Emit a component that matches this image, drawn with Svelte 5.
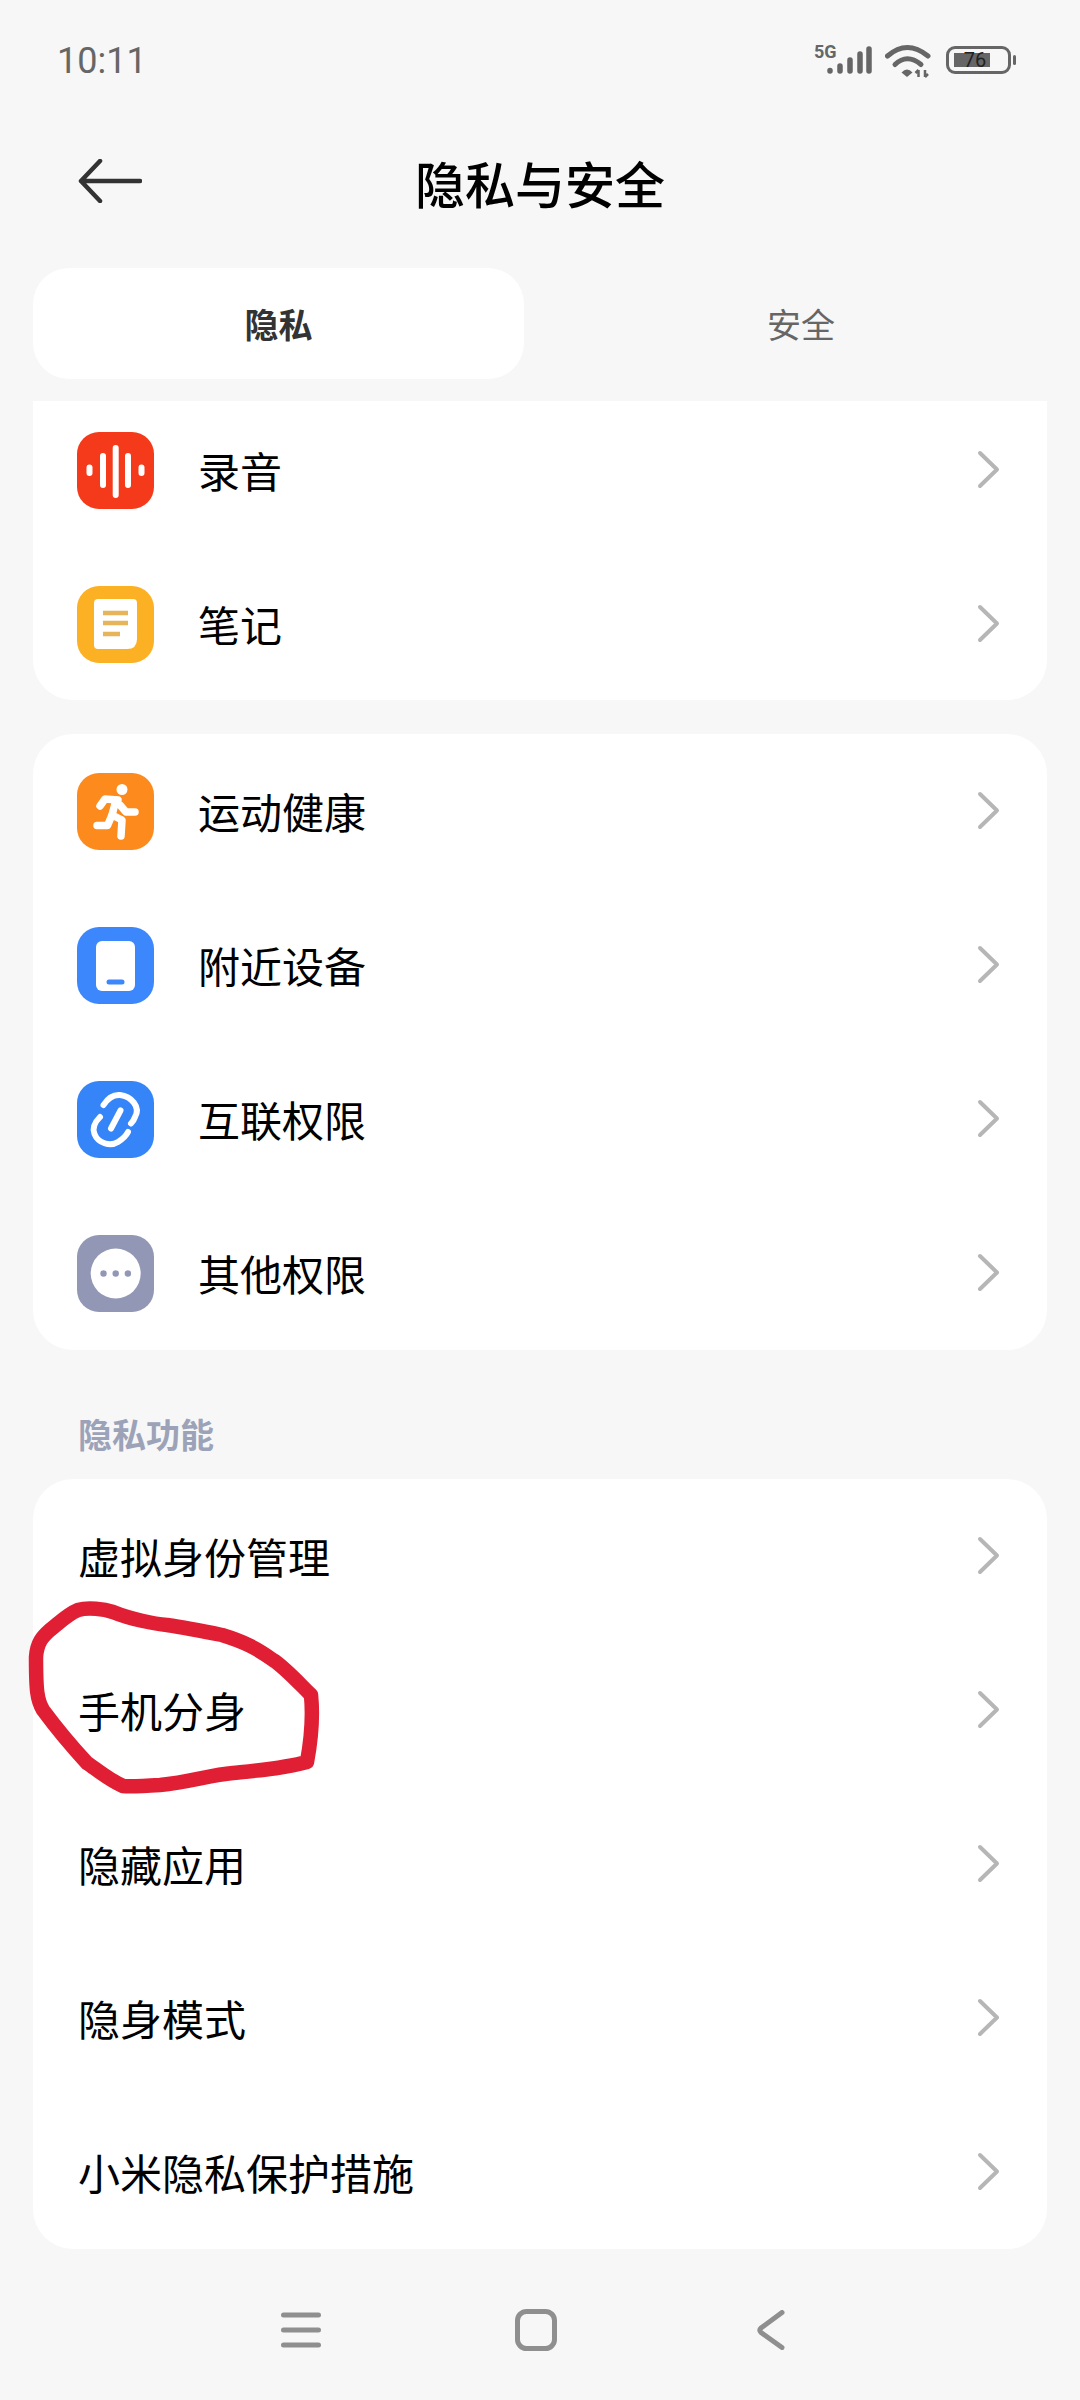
<script>
  const group1 = [
    { label: '录音', icon: 'rec' },
    { label: '笔记', icon: 'note' }
  ];
  const group2 = [
    { label: '运动健康', icon: 'run' },
    { label: '附近设备', icon: 'phone' },
    { label: '互联权限', icon: 'link' },
    { label: '其他权限', icon: 'more' }
  ];
  const group3 = ['虚拟身份管理', '手机分身', '隐藏应用', '隐身模式', '小米隐私保护措施'];
</script>

{#snippet chevron()}
  <svg class="chev" viewBox="0 0 24 40" aria-hidden="true">
    <path d="M3 3 L20 19.5 L3 36" fill="none" stroke="#b6b6b6" stroke-width="4" stroke-linecap="round" stroke-linejoin="round" />
  </svg>
{/snippet}

{#snippet appIcon(name)}
  <svg class="icon" viewBox="0 0 77 77" aria-hidden="true">
    {#if name === 'rec'}
      <rect width="77" height="77" rx="22" fill="#f43a1b" />
      <g stroke="#fff" stroke-width="6" stroke-linecap="round">
        <path d="M12.5 35.5v5.5M26 24v29M38.7 16v47M51 24v29M64.5 35.5v5.5" />
      </g>
    {:else if name === 'note'}
      <rect width="77" height="77" rx="22" fill="#fcb024" />
      <path d="M21 13H56a4 4 0 0 1 4 4V53Q60 63 50 63H21a4 4 0 0 1-4-4V17a4 4 0 0 1 4-4Z" fill="#fff" />
      <path d="M26 27H51M26 37H51M26 48H43" stroke="#e8b45a" stroke-width="4.5" fill="none" />
    {:else if name === 'run'}
      <rect width="77" height="77" rx="22" fill="#fc8a1c" />
      <circle cx="45" cy="16.5" r="5.5" fill="#fff" />
      <g fill="none" stroke="#fff" stroke-width="7.5" stroke-linecap="round" stroke-linejoin="round">
        <path d="M23 33L28 26L41 27" />
        <path d="M39 27L35 42L45 47L44 63" />
        <path d="M43 32L49 39H58" />
        <path d="M35 42L30.5 52.5H20" />
      </g>
    {:else if name === 'phone'}
      <rect width="77" height="77" rx="22" fill="#3b87fb" />
      <rect x="19" y="14" width="39" height="50" rx="6" fill="#fff" />
      <path d="M32 55H45" stroke="#3b87fb" stroke-width="5" stroke-linecap="round" />
    {:else if name === 'link'}
      <rect width="77" height="77" rx="22" fill="#3585f8" />
      <g fill="none" stroke="#fff" stroke-width="6" stroke-linecap="round">
        <path d="M34 47.5L43.5 29.5" />
        <path d="M26.5 24C31 17 37 13.5 43 14C54 15 64 26 58 36C57 39 55.500 41 54 42.500" />
        <path d="M23 36C18 41 15 47 17.500 53C21 62 33 66 41 61C45 58.500 49 55 51 51" />
      </g>
    {:else}
      <rect width="77" height="77" rx="22" fill="#9197b5" />
      <circle cx="38.700" cy="38.500" r="25" fill="#fff" />
      <g fill="#9197b5">
        <circle cx="26.500" cy="38.500" r="3.200" />
        <circle cx="38.700" cy="38.500" r="3.200" />
        <circle cx="50.900" cy="38.500" r="3.200" />
      </g>
    {/if}
  </svg>
{/snippet}

<div class="page">
  <div class="status">
    <span class="time">10:11</span>
    <div class="sys">
      <div class="signal">
        <span class="five">5G</span>
        <svg class="bars" viewBox="0 0 45 28" aria-hidden="true">
          <g fill="none" stroke="#666" stroke-width="5.500" stroke-linecap="round">
            <path d="M3 24.500v.5M13 20v5M23 14v11M33 8v17M42 3v22" />
          </g>
        </svg>
      </div>
      <svg class="wifi" viewBox="0 0 46 34" aria-hidden="true">
        <g fill="none" stroke="#666" stroke-width="5" stroke-linecap="round">
          <path d="M2.500 12Q22 -5 43 12" />
          <path d="M10 20.500Q22 9 36 20.500" />
        </g>
        <path d="M16.500 28.500Q22 22.500 27.500 28.500L22 33Z" fill="#666" />
        <path d="M33.500 33V26M30.500 29L33.500 26M40 26V33M43 30L40 33" fill="none" stroke="#666" stroke-width="2.500" />
      </svg>
      <div class="batt">
        <div class="cell">
          <div class="fill"></div>
          <span class="pct">76</span>
        </div>
        <span class="tip"></span>
      </div>
    </div>
  </div>

  <header class="head">
    <svg class="back" viewBox="0 0 64 44" aria-hidden="true">
      <path d="M22 2L3 22L22 42M3 22H62" fill="none" stroke="#333" stroke-width="4.500" stroke-linecap="round" stroke-linejoin="round" />
    </svg>
    <h1>隐私与安全</h1>
  </header>

  <div class="tabs">
    <div class="tab on">隐私</div>
    <div class="tab">安全</div>
  </div>

  <section class="card clip">
    {#each group1 as r}
      <div class="row">
        {@render appIcon(r.icon)}
        <span class="lab">{r.label}</span>
        {@render chevron()}
      </div>
    {/each}
  </section>

  <section class="card second">
    {#each group2 as r}
      <div class="row">
        {@render appIcon(r.icon)}
        <span class="lab">{r.label}</span>
        {@render chevron()}
      </div>
    {/each}
  </section>

  <div class="sect">隐私功能</div>

  <section class="card third">
    {#each group3 as t}
      <div class="row plain">
        <span class="lab">{t}</span>
        {@render chevron()}
      </div>
    {/each}
  </section>

  <nav class="nav">
    <svg class="n1" viewBox="0 0 40 36" aria-hidden="true">
      <path d="M2.500 3H37.500M2.500 18H37.500M2.500 33H37.500" stroke="#8f8f8f" stroke-width="5" stroke-linecap="round" />
    </svg>
    <svg class="n2" viewBox="0 0 42 42" aria-hidden="true">
      <rect x="2.500" y="2.500" width="37" height="37" rx="9" fill="none" stroke="#8f8f8f" stroke-width="5" />
    </svg>
    <svg class="n3" viewBox="0 0 28 40" aria-hidden="true">
      <path d="M25 2.500L4 18Q1.500 20 4 22.500L25 37.500" fill="none" stroke="#8f8f8f" stroke-width="5" stroke-linecap="round" stroke-linejoin="round" />
    </svg>
  </nav>

  <svg class="scribble" viewBox="0 0 1080 2400" aria-hidden="true">
    <path d="M78 1610C88 1607 104 1609 113 1612C130 1619 155 1624 167 1625C187 1628 207 1632 222 1635C245 1642 258 1649 273 1660C283 1666 294 1678 311 1695C313 1715 312 1735 307 1762C285 1768 262 1770 233 1773C210 1775 190 1782 160 1785C145 1786 130 1787 123 1786C107 1779 95 1768 87 1763C75 1750 60 1733 43 1710C37 1700 36 1690 36 1657C37 1643 42 1637 50 1630C60 1622 68 1614 78 1610Z" fill="none" stroke="#e01f35" stroke-width="14.500" stroke-linejoin="round" />
  </svg>
</div>

<style>
  :global(body) {
    margin: 0;
    background: #f7f7f7;
  }
  .page {
    position: relative;
    width: 1080px;
    height: 2400px;
    overflow: hidden;
    background: #f7f7f7;
    font-family: "Noto Sans CJK SC", "Noto Sans", sans-serif;
    color: #000;
  }
  .status {
    height: 122px;
    box-sizing: border-box;
    padding: 38px 64px 0 57px;
    display: flex;
    justify-content: space-between;
    align-items: flex-start;
  }
  .time {
    font: 400 36px/46px Roboto, sans-serif;
    color: #666;
  }
  .sys {
    display: flex;
    align-items: flex-start;
  }
  .signal {
    position: relative;
    width: 58px;
    height: 36px;
    margin-top: 6px;
  }
  .five {
    position: absolute;
    left: 0;
    top: 0;
    font: 700 18px/16px Roboto, sans-serif;
    color: #666;
  }
  .bars {
    position: absolute;
    left: 13px;
    top: 2px;
    width: 45px;
    height: 28px;
  }
  .wifi {
    width: 46px;
    height: 34px;
    margin: 6px 15px 0 13px;
  }
  .batt {
    display: flex;
    align-items: center;
    margin-top: 8px;
    height: 28px;
  }
  .cell {
    position: relative;
    width: 65px;
    height: 28px;
    box-sizing: border-box;
    border: 3.500px solid #666;
    border-radius: 9px;
    padding: 4px 5px;
  }
  .fill {
    width: 36px;
    height: 100%;
    background: #666;
  }
  .pct {
    position: absolute;
    left: 11px;
    top: -3px;
    width: 30px;
    text-align: center;
    font: 400 20px/28px Roboto, sans-serif;
    color: #222;
  }
  .tip {
    width: 3px;
    height: 10px;
    margin-left: 2px;
    background: #666;
    border-radius: 2px;
  }
  .head {
    position: relative;
    height: 120px;
    display: flex;
    align-items: center;
    justify-content: center;
  }
  .back {
    position: absolute;
    left: 78px;
    top: 37px;
    width: 64px;
    height: 44px;
  }
  h1 {
    margin: 0;
    font-size: 50px;
    font-weight: 500;
    line-height: 70px;
  }
  .tabs {
    margin: 26px 33px 22px;
    display: grid;
    grid-template-columns: 491px 490px;
    column-gap: 32px;
    height: 111px;
  }
  .tab {
    display: flex;
    align-items: center;
    justify-content: center;
    border-radius: 36px;
    font-size: 34px;
    color: #666;
  }
  .tab.on {
    background: #fff;
    color: #333;
    font-weight: 700;
  }
  .card {
    margin: 0 33px;
    background: #fff;
    border-radius: 40px;
    overflow: hidden;
  }
  .clip {
    height: 299px;
    border-radius: 0 0 40px 40px;
  }
  .clip .row:first-child {
    margin-top: -8px;
  }
  .second {
    margin-top: 34px;
  }
  .sect {
    height: 129px;
    box-sizing: border-box;
    padding: 59px 0 0 78px;
    font-size: 34px;
    line-height: 50px;
    font-weight: 700;
    color: #9ca3b8;
  }
  .row {
    height: 154px;
    box-sizing: border-box;
    display: flex;
    align-items: center;
    padding: 0 46px 0 44px;
  }
  .row.plain {
    padding-left: 45px;
  }
  .icon {
    width: 77px;
    height: 77px;
    flex: none;
    margin-right: 44px;
  }
  .lab {
    flex: 1;
    font-size: 42px;
    line-height: 60px;
    color: #000;
  }
  .chev {
    width: 24px;
    height: 40px;
    flex: none;
  }
  .nav {
    position: relative;
    height: 150px;
  }
  .n1, .n2, .n3 {
    position: absolute;
  }
  .n1 { left: 281px; top: 63px; width: 40px; height: 36px; }
  .n2 { left: 515px; top: 60px; width: 42px; height: 42px; }
  .n3 { left: 757px; top: 61px; width: 28px; height: 40px; }
  .scribble {
    position: absolute;
    inset: 0;
    width: 1080px;
    height: 2400px;
    pointer-events: none;
  }
</style>
